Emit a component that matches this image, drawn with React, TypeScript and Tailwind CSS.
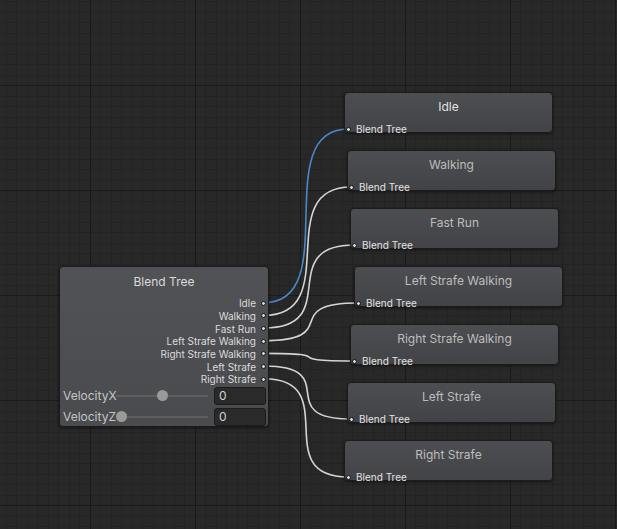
import React from "react";

const W = 617;
const H = 529;

function gridLines(origin: number, step: number, max: number) {
  const res: { p: number; major: boolean }[] = [];
  const minor = step / 10;
  let k = Math.floor(-origin / minor) - 1;
  for (; ; k++) {
    const v = origin + k * minor;
    if (v > max + 1) break;
    if (v < -1) continue;
    const major = ((k % 10) + 10) % 10 === 0;
    res.push({ p: Math.round(v) + 0.5, major });
  }
  return res;
}

const targets = [
  { name: "Idle", x: 344, y: 92, active: true },
  { name: "Walking", x: 347, y: 150 },
  { name: "Fast Run", x: 350, y: 208 },
  { name: "Left Strafe Walking", x: 354, y: 266 },
  { name: "Right Strafe Walking", x: 350, y: 324 },
  { name: "Left Strafe", x: 347, y: 382 },
  { name: "Right Strafe", x: 344, y: 440 },
];

const outputs = targets.map((t) => t.name);
const srcX = 264;
const srcY = (i: number) => 302.7 + 12.67 * i;

function Port() {
  return <span className="block w-[5px] h-[5px] rounded-full bg-[#d8d8d8] border border-[#111] shrink-0" />;
}

function ParamRow({ label, value }: { label: string; value: number }) {
  return (
    <div className="flex items-center h-[18px] shrink-0">
      <span className="w-[53px] text-[12px] text-[#c4c4c4] whitespace-nowrap leading-none">{label}</span>
      <div className="relative w-[92px] h-[2px] bg-[#5e5e5e]">
        <span
          className="absolute top-[-4.5px] w-[11px] h-[11px] rounded-full bg-[#9a9a9a]"
          style={{ left: value * 81 }}
        />
      </div>
      <div className="ml-[6px] w-[52px] h-[18px] bg-[#2a2a2a] border border-[#1c1c1c] rounded-[3px] flex items-center pl-[4px] text-[12px] text-[#d2d2d2]">
        0
      </div>
    </div>
  );
}

export default function App() {
  const vx = gridLines(89.5, 105, W);
  const hy = gridLines(85.3, 105, H);
  return (
    <div className="relative w-[617px] h-[529px] bg-[#282828] overflow-hidden font-['Inter',sans-serif]">
      <svg className="absolute inset-0" width={W} height={H}>
        {vx.filter((l) => !l.major).map((l, i) => (
          <line key={"vm" + i} x1={l.p} x2={l.p} y1={0} y2={H} stroke="#232323" strokeWidth={1} />
        ))}
        {hy.filter((l) => !l.major).map((l, i) => (
          <line key={"hm" + i} x1={0} x2={W} y1={l.p} y2={l.p} stroke="#232323" strokeWidth={1} />
        ))}
        {vx.filter((l) => l.major).map((l, i) => (
          <line key={"vM" + i} x1={l.p} x2={l.p} y1={0} y2={H} stroke="#1a1a1a" strokeWidth={1} />
        ))}
        {hy.filter((l) => l.major).map((l, i) => (
          <line key={"hM" + i} x1={0} x2={W} y1={l.p} y2={l.p} stroke="#1a1a1a" strokeWidth={1} />
        ))}
        {targets.map((t, i) => {
          const x1 = srcX;
          const y1 = srcY(i);
          const x2 = t.x + 4;
          const y2 = t.y + 37;
          const d = 80;
          return (
            <path
              key={t.name}
              d={`M${x1},${y1} C${x1 + d},${y1} ${x2 - d},${y2} ${x2},${y2}`}
              fill="none"
              stroke={t.active ? "#4a87c9" : "#d4d4d4"}
              strokeWidth={1.6}
            />
          );
        })}
      </svg>

      {/* Blend Tree node */}
      <div className="absolute left-[59px] top-[266px] w-[210px] h-[161px] rounded-[4px] border border-[#1b1b1b] bg-[linear-gradient(#515255,#4a4b4e)] shadow-[0_1px_3px_rgba(0,0,0,0.5)] flex flex-col">
        <div className="h-[30px] shrink-0 flex items-center justify-center text-[12px] text-[#dadada]">Blend Tree</div>
        <div className="flex flex-col shrink-0">
          {outputs.map((o) => (
            <div key={o} className="h-[12.67px] shrink-0 flex items-center justify-end pr-[2px]">
              <span className="text-[10px] leading-none text-[#dcdcdc] whitespace-nowrap">{o}</span>
              <span className="ml-[5px]">
                <Port />
              </span>
            </div>
          ))}
        </div>
        <div className="mt-[1px] flex flex-col gap-[3px] pl-[3px] pr-[2px] shrink-0">
          <ParamRow label="VelocityX" value={0.5} />
          <ParamRow label="VelocityZ" value={0} />
        </div>
      </div>

      {targets.map((t) => (
        <div
          key={t.name}
          className="absolute w-[209px] h-[41px] rounded-[4px] border border-[#1b1b1b] bg-[linear-gradient(#4c4e51,#414346)] shadow-[0_1px_3px_rgba(0,0,0,0.5)] flex flex-col"
          style={{ left: t.x, top: t.y }}
        >
          <div
            className={
              "h-[28px] shrink-0 flex items-center justify-center text-[12px] " +
              (t.active ? "text-[#e2e2e2]" : "text-[#bdbdbd]")
            }
          >
            {t.name}
          </div>
          <div className="h-[10px] mt-[3px] shrink-0 flex items-center pl-[1px]">
            <Port />
            <span className="ml-[5px] text-[10px] leading-none text-[#e2e2e2]">Blend Tree</span>
          </div>
        </div>
      ))}
    </div>
  );
}
